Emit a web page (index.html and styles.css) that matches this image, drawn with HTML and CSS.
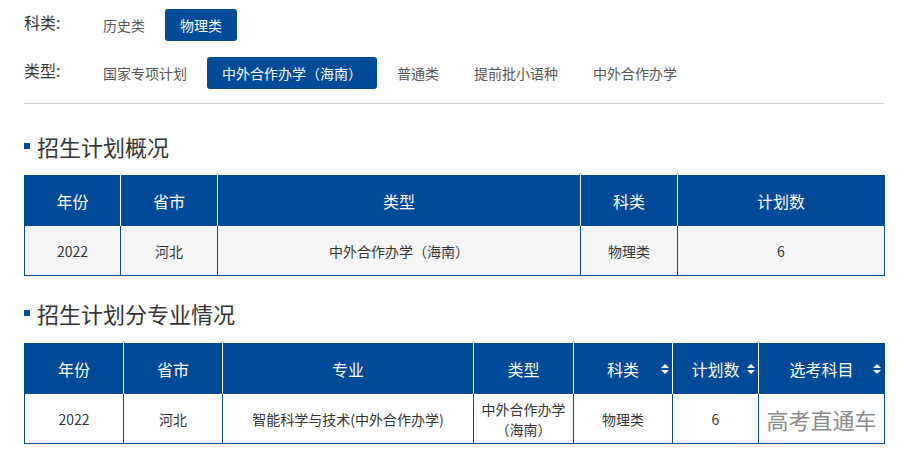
FILE: index.html
```html
<!DOCTYPE html>
<html lang="zh-CN">
<head>
<meta charset="utf-8">
<title>招生计划</title>
<link rel="stylesheet" href="styles.css">
</head>
<body>
<div class="page">
  <div class="filters">
    <div class="filter-row">
      <span class="filter-label">科类:</span>
      <span class="opt">历史类</span>
      <span class="opt active">物理类</span>
    </div>
    <div class="filter-row">
      <span class="filter-label">类型:</span>
      <span class="opt">国家专项计划</span>
      <span class="opt active">中外合作办学（海南）</span>
      <span class="opt">普通类</span>
      <span class="opt">提前批小语种</span>
      <span class="opt">中外合作办学</span>
    </div>
  </div>
  <div class="divider"></div>

  <h2 class="sec-title first">招生计划概况</h2>
  <table class="data gray">
    <colgroup>
      <col style="width:96px"><col style="width:97px"><col style="width:363px"><col style="width:97px"><col style="width:207px">
    </colgroup>
    <thead>
      <tr><th>年份</th><th>省市</th><th>类型</th><th>科类</th><th>计划数</th></tr>
    </thead>
    <tbody>
      <tr><td>2022</td><td>河北</td><td>中外合作办学（海南）</td><td>物理类</td><td>6</td></tr>
    </tbody>
  </table>

  <h2 class="sec-title">招生计划分专业情况</h2>
  <table class="data">
    <colgroup>
      <col style="width:99px"><col style="width:99px"><col style="width:251px"><col style="width:100px"><col style="width:99px"><col style="width:86px"><col style="width:126px">
    </colgroup>
    <thead>
      <tr>
        <th>年份</th><th>省市</th><th>专业</th><th>类型</th>
        <th class="sortable">科类<svg class="sort" viewBox="0 0 8 10" width="8" height="10"><polygon points="0,4 4,0 8,4"/><polygon points="0,6 4,10 8,6"/></svg></th>
        <th class="sortable">计划数<svg class="sort" viewBox="0 0 8 10" width="8" height="10"><polygon points="0,4 4,0 8,4"/><polygon points="0,6 4,10 8,6"/></svg></th>
        <th class="sortable">选考科目<svg class="sort" viewBox="0 0 8 10" width="8" height="10"><polygon points="0,4 4,0 8,4"/><polygon points="0,6 4,10 8,6"/></svg></th>
      </tr>
    </thead>
    <tbody>
      <tr>
        <td>2022</td><td>河北</td><td>智能科学与技术(中外合作办学)</td>
        <td class="two-line">中外合作办学<br>（海南）</td>
        <td>物理类</td><td>6</td>
        <td class="mark">高考直通车</td>
      </tr>
    </tbody>
  </table>
</div>
</body>
</html>
```
FILE: styles.css
```css
* { box-sizing: border-box; }
html, body { margin: 0; padding: 0; background: #fff; }
body {
  font-family: "Noto Sans CJK SC", "Noto Sans", "Liberation Sans", sans-serif;
  color: #333;
}
.page {
  padding: 9px 19px 0 24px;
  width: 904px;
}
.filters {
  display: flex;
  flex-direction: column;
  gap: 16px;
}
.filter-row {
  display: flex;
  align-items: center;
  height: 32px;
}
.filter-label {
  width: 64px;
  font-size: 16px;
  color: #333;
  margin-bottom: 6px;
}
.opt {
  height: 32px;
  line-height: 32px;
  padding: 0 15px;
  margin-right: 5px;
  font-size: 14px;
  color: #555;
  border-radius: 3px;
  white-space: nowrap;
}
.opt.active {
  background: #004a99;
  color: #fff;
}
.divider {
  margin-top: 14px;
  height: 1px;
  width: 860px;
  background: #cfcfcf;
}
.sec-title {
  display: flex;
  align-items: center;
  margin: 22px 0 15px;
  height: 30px;
  font-size: 22px;
  font-weight: normal;
  color: #333;
}
.sec-title.first { margin: 27px 0 14px; }
.sec-title::before {
  content: "";
  width: 6px;
  height: 6px;
  background: #004a99;
  margin-right: 7px;
  margin-top: -1px;
}
.data {
  width: 861px;
  table-layout: fixed;
  border-collapse: collapse;
  border: 1px solid #004a99;
}
.data th {
  height: 50px;
  background: #004a99;
  color: #fff;
  font-size: 16px;
  font-weight: normal;
  border-left: 1px solid #fff;
  padding: 0;
  text-align: center;
}
.data th:first-child { border-left: 1px solid #004a99; }
.data th.sortable { position: relative; }
.data .sort {
  position: absolute;
  right: 3px;
  top: 20px;
  fill: #fff;
}
.data td {
  height: 50px;
  font-size: 14px;
  color: #333;
  text-align: center;
  border: 1px solid #004a99;
  padding: 0;
  background: #fff;
}
.data.gray td { background: #f5f5f5; }
.data td.two-line {
  line-height: 20px;
  font-size: 14px;
}
.data td.mark {
  font-size: 22px;
  color: #8a8a8a;
}
```
